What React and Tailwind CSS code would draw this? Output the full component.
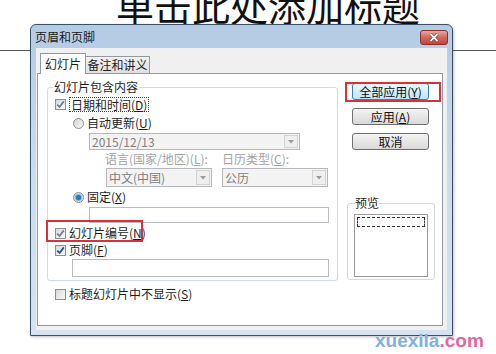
import React from 'react';

const cjk = "font-['Noto_Sans_CJK_SC',sans-serif]";

function Box({ checked, tone = 'blue' }) {
  return (
    <span className="flex h-[11px] w-[11px] shrink-0 items-center justify-center border border-[#8e8f8f] bg-gradient-to-br from-[#d8d8d8] to-[#fbfbfb]">
      {checked && (
        <svg width="9" height="9" viewBox="0 0 9 9">
          <path d="M1.2 4.6 L3.6 7 L7.8 1.4" fill="none" stroke={tone === 'blue' ? '#1d4f9e' : '#6f8197'} strokeWidth="1.8" />
        </svg>
      )}
    </span>
  );
}

function Radio({ on }) {
  return (
    <span className="flex h-[11px] w-[11px] shrink-0 items-center justify-center rounded-full border border-[#8e8f8f] bg-gradient-to-br from-[#d2d2d2] to-[#fafafa]">
      {on && <span className="h-[5px] w-[5px] rounded-full bg-[#2a78b2] shadow-[0_0_1px_1px_#6fb2dd]" />}
    </span>
  );
}

function Arrow() {
  return (
    <span className="m-px flex w-[14px] items-center justify-center border border-[#d4d4d4] bg-[#efefef]">
      <svg width="6" height="4" viewBox="0 0 6 4">
        <path d="M0 0 H6 L3 3.5 Z" fill="#9a9a9a" />
      </svg>
    </span>
  );
}

function Btn({ children, def }) {
  return (
    <div
      className={
        def
          ? 'flex h-[17px] w-[77px] items-center justify-center rounded-[3px] border border-[#3c7fb1] bg-gradient-to-b from-[#eef8fe] to-[#bde4fb] text-[12px] leading-4 text-[#111]'
          : 'flex h-[17px] w-[77px] items-center justify-center rounded-[3px] border border-[#707070] bg-gradient-to-b from-[#f4f4f4] to-[#d9d9d9] text-[12px] leading-4 text-[#111]'
      }
    >
      {children}
    </div>
  );
}

function Dialog() {
  return (
    <div className={`absolute left-[30px] top-[24px] flex h-[312px] w-[423px] flex-col rounded-t-[6px] border border-[#3b5068] bg-gradient-to-b from-[#b4cbe4] via-[#cbdcef] to-[#d3e3f3] shadow-[1px_1px_3px_rgba(0,0,0,0.25)] ${cjk}`}>
      <div className="flex h-[23px] items-start justify-between px-[4px]">
        <span className="mt-[4px] text-[12px] leading-4 text-[#1a1a1a]">页眉和页脚</span>
        <div className="mt-[5px] flex h-[15px] w-[28px] items-center justify-center rounded-[3px] border border-[#8c3027] bg-gradient-to-b from-[#e6a79e] via-[#d2685c] to-[#c0443a]">
          <svg width="10" height="9" viewBox="0 0 10 9">
            <path d="M1.5 1 L8.5 8 M8.5 1 L1.5 8" stroke="#6b1e17" strokeWidth="3" />
            <path d="M1.5 1 L8.5 8 M8.5 1 L1.5 8" stroke="#ffffff" strokeWidth="1.8" />
          </svg>
        </div>
      </div>

      <div className="mx-[5px] mb-[5px] flex flex-1 flex-col bg-[#f0f0f0] pb-[4px] pl-px pr-[4px] pt-[5px] text-[12px] leading-4 text-[#1e1e1e]">
        <div className="flex items-end pl-[3px]">
          <div className="relative z-10 -mb-px flex h-[21px] w-[46px] items-start justify-center border border-b-0 border-[#8f9aa6] bg-white pt-[2px]">幻灯片</div>
          <div className="flex h-[17px] w-[64px] items-center justify-center border border-b-0 border-l-0 border-[#8f9aa6] bg-gradient-to-b from-[#f2f2f2] to-[#e0e0e0]">备注和讲义</div>
        </div>

        <div className="flex flex-1 items-start border border-[#8f9aa6] bg-white">
          <div className="ml-[9px] mt-[5px] flex flex-col">
            <fieldset className="flex w-[291px] flex-col rounded-[3px] border border-[#d3dae0] pb-[3px]">
              <legend className="ml-[5px] px-px">幻灯片包含内容</legend>

              <div className="ml-[7px] mt-px flex h-4 items-center gap-[3px]">
                <Box checked tone="grey" />
                <span className="border border-dotted border-[#444] px-px leading-[13px]">日期和时间(<span className="underline">D</span>)</span>
              </div>

              <div className="ml-[25px] mt-[3px] flex h-4 items-center gap-[3px]">
                <Radio />
                <span>自动更新(<span className="underline">U</span>)</span>
              </div>

              <div className="ml-[41px] mt-[2px] flex h-[17px] w-[211px] border border-[#b5b9bd] bg-[#f3f3f3]">
                <span className="flex-1 pl-[2px] leading-[15px] text-[#808080]">2015/12/13</span>
                <Arrow />
              </div>

              <div className="ml-[57px] mt-px flex h-4 items-center text-[#a3a3a3]">
                <span className="w-[117px]">语言(国家/地区)(<span className="underline">L</span>):</span>
                <span>日历类型(<span className="underline">C</span>):</span>
              </div>

              <div className="ml-[58px] mt-px flex h-[19px] gap-[10px]">
                <div className="flex w-[106px] border border-[#b5b9bd] bg-[#f3f3f3]">
                  <span className="flex-1 pl-[2px] leading-[17px] text-[#808080]">中文(中国)</span>
                  <Arrow />
                </div>
                <div className="flex w-[106px] border border-[#b5b9bd] bg-[#f3f3f3]">
                  <span className="flex-1 pl-[2px] leading-[17px] text-[#808080]">公历</span>
                  <Arrow />
                </div>
              </div>

              <div className="ml-[25px] mt-[2px] flex h-4 items-center gap-[3px]">
                <Radio on />
                <span>固定(<span className="underline">X</span>)</span>
              </div>

              <div className="ml-[41px] mt-[2px] h-4 w-[240px] border border-[#b9bcc0] bg-white" />

              <div className="relative ml-[7px] mt-[2px] flex h-4 items-center gap-[3px]">
                <Box checked tone="grey" />
                <span>幻灯片编号(<span className="underline">N</span>)</span>
                <div className="absolute left-[-9px] top-[-5px] h-[22px] w-[97px] border-2 border-[#d8313a]" />
              </div>

              <div className="ml-[7px] mt-px flex h-4 items-center gap-[3px]">
                <Box checked />
                <span>页脚(<span className="underline">F</span>)</span>
              </div>

              <div className="ml-[24px] mt-px h-[18px] w-[257px] border border-[#b9bcc0] bg-white" />
            </fieldset>

            <div className="ml-[8px] mt-[5px] flex h-4 items-center gap-[3px]">
              <Box />
              <span>标题幻灯片中不显示(<span className="underline">S</span>)</span>
            </div>
          </div>

          <div className="ml-[9px] mt-[9px] flex w-[88px] flex-col">
            <div className="relative ml-[5px]">
              <Btn def>全部应用(<span className="underline">Y</span>)</Btn>
              <div className="absolute left-[-7px] top-[-1px] h-[20px] w-[96px] border-2 border-[#d8313a]" />
            </div>
            <div className="ml-[5px] mt-[8px]">
              <Btn>应用(<span className="underline">A</span>)</Btn>
            </div>
            <div className="ml-[5px] mt-[8px]">
              <Btn>取消</Btn>
            </div>

            <fieldset className="mt-[45px] flex w-[88px] flex-col rounded-[3px] border border-[#d3dae0] pb-[2px]">
              <legend className="ml-[7px]">预览</legend>
              <div className="ml-[6px] mt-[3px] h-[63px] w-[74px] border border-[#9a9a9a] bg-white p-[2px]">
                <div className="h-[10px] w-[68px] border border-dashed border-[#333]" />
              </div>
            </fieldset>
          </div>
        </div>
      </div>
    </div>
  );
}

export default function App() {
  return (
    <div className="relative h-[354px] w-[496px] overflow-hidden bg-white">
      <div className={`mt-[-14px] h-[38px] whitespace-nowrap pl-[116px] text-[38px] leading-[38px] text-[#111] ${cjk}`}>单击此处添加标题</div>
      <div className="mt-[26px] h-px bg-[#555]" />
      <Dialog />
      <div className="absolute left-[375px] top-[331px] font-['Liberation_Sans',sans-serif] text-[19px] font-bold leading-[19px]">
        <span className="text-[#7fb1dc]">xuexila</span>
        <span className="text-[#e2679f]">.com</span>
      </div>
    </div>
  );
}
